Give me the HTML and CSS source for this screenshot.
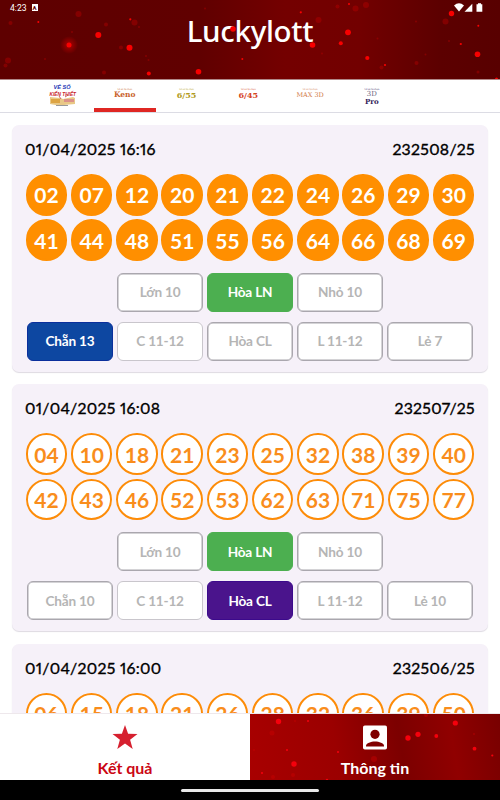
FILE: index.html
```html
<!DOCTYPE html>
<html lang="vi">
<head>
<meta charset="utf-8">
	<title>Luckylott</title>

	<link rel="stylesheet" href="styles.css">
</head>
<body>

<div class="app">
	<div class="header">
		<svg class="sparks" width="500" height="79" viewBox="0 0 500 79">
			<defs>
				<radialGradient id="glow">
					<stop offset="0" stop-color="#f00" stop-opacity=".5"/>
					<stop offset="1" stop-color="#f00" stop-opacity="0"/>
				</radialGradient>
			</defs>
			<circle cx="69" cy="45" r="9" fill="url(#glow)"/>
			<g fill="#c00000" opacity=".38">
				<circle cx="78.500" cy="14" r="3"/>
				<circle cx="10.500" cy="23" r="2"/>
				<circle cx="106" cy="24.500" r="2"/>
				<circle cx="134.500" cy="22.500" r="3"/>
				<circle cx="139" cy="27" r="1"/>
				<circle cx="8" cy="60.500" r="3"/>
				<circle cx="5.500" cy="65.500" r="2"/>
				<circle cx="121" cy="47.500" r="2"/>
				<circle cx="104" cy="72.500" r="2"/>
				<circle cx="72" cy="32" r="1"/>
				<circle cx="45" cy="59" r="1"/>
				<circle cx="146" cy="56" r="1"/>
				<circle cx="148.500" cy="60" r="1"/>
				<circle cx="205" cy="8.500" r="1"/>
				<circle cx="318.500" cy="20" r="3"/>
				<circle cx="337.500" cy="6.500" r="2"/>
				<circle cx="355.500" cy="8.500" r="3"/>
				<circle cx="366" cy="5" r="3"/>
				<circle cx="445.500" cy="21.500" r="3"/>
				<circle cx="381.500" cy="67.500" r="2"/>
				<circle cx="416.500" cy="63" r="2"/>
				<circle cx="425.500" cy="54.500" r="1"/>
				<circle cx="416" cy="21.500" r="1"/>
				<circle cx="377.500" cy="38.500" r="1"/>
				<circle cx="322" cy="53.500" r="1"/>
				<circle cx="478" cy="72" r="1.500"/>
				<circle cx="449" cy="41" r="1"/>
			</g>
			<g fill="#f80000">
				<circle cx="69" cy="45" r="2.500"/>
				<circle cx="98.300" cy="35" r="3"/>
				<circle cx="129.500" cy="47.700" r="3"/>
				<circle cx="148.800" cy="73.500" r="2"/>
				<circle cx="198.500" cy="71.700" r="2.800"/>
				<circle cx="38.300" cy="22" r="1"/>
				<circle cx="130.300" cy="19.300" r="1.100"/>
				<circle cx="242.300" cy="59" r="1"/>
				<circle cx="312.500" cy="45" r="2.800"/>
				<circle cx="348" cy="32.300" r="2.900"/>
				<circle cx="340.800" cy="43.300" r="2"/>
				<circle cx="367.300" cy="58" r="2.100"/>
				<circle cx="385" cy="65" r="1.100"/>
				<circle cx="300.800" cy="12.300" r="1.100"/>
				<circle cx="349" cy="4" r="1"/>
				<circle cx="451.500" cy="13.500" r="2.700"/>
				<circle cx="477.500" cy="54.200" r="2.800"/>
				<circle cx="478.300" cy="25.700" r="1"/>
				<circle cx="460.800" cy="44" r="1.100"/>
				<circle cx="496.500" cy="79" r="1.500"/>
			</g>
		</svg>
		<div class="status">
			<span class="clock">4:23</span>
			<span class="badge">A</span>
			<svg class="signals" width="30" height="10" viewBox="0 0 30 10">
				<path d="M0 2.500Q5-1.800 10 2.500L5 8.500z" fill="#fff"/>
				<path d="M10.500 8.700L18.300 .7v8z" fill="#fff"/>
				<path d="M22.500 1.200h1.500V.3h3v.9h1.300v7.500h-5.800z" fill="#fff"/>
			</svg>
		</div>
		<h1 class="title">Luckylott</h1>
		<svg class="sparks" width="500" height="79" viewBox="0 0 500 79">
			<circle cx="233" cy="29" r="2.800" fill="#f80000"/>
		</svg>
	</div>

	<div class="tabs">
		<div class="tab">
			<svg width="28" height="26" viewBox="0 0 28 26">
				<path d="M1 16l10 1 3 1 10-2 2 1v6l-11 1-3 1-11-2z" fill="#e9c886"/>
				<path d="M2 18h9v4H2z" fill="#dda443"/>
				<path d="M15 18h10v3H15z" fill="#dc9188"/>
				<path d="M7 24.500h12" stroke="#999" stroke-width="1"/>
				<path d="M10 15l2 3M16 16l3-2" stroke="#c66" stroke-width="1"/>
				<text x="4.500" y="7.500" class="logo-blue" textLength="17" lengthAdjust="spacingAndGlyphs">VÉ SỐ</text>
				<text x=".5" y="14.500" class="logo-red" textLength="26.500" lengthAdjust="spacingAndGlyphs">KIẾN THIẾT</text>
			</svg>
		</div>
		<div class="tab keno active"><small>Xổ số tự chọn</small><b>Keno</b></div>
		<div class="tab gold"><small>Xổ số tự chọn</small><b>6/55</b></div>
		<div class="tab red"><small>Xổ số tự chọn</small><b>6/45</b></div>
		<div class="tab max"><small>Xổ số tự chọn</small><span>MAX 3D</span></div>
		<div class="tab pro"><small>Xổ số tự chọn</small><span>3D</span><b>Pro</b></div>
	</div>

	<div class="list">
		<div class="card filled">
			<div class="card-head"><span class="date">01/04/2025 16:16</span><span>232508/25</span></div>
			<div class="balls">
				<span>02</span><span>07</span><span>12</span><span>20</span><span>21</span>
				<span>22</span><span>24</span><span>26</span><span>29</span><span>30</span>
				<span>41</span><span>44</span><span>48</span><span>51</span><span>55</span>
				<span>56</span><span>64</span><span>66</span><span>68</span><span>69</span>
			</div>
			<div class="bets">
				<span class="bet">Lớn 10</span>
				<span class="bet green">Hòa LN</span>
				<span class="bet">Nhỏ 10</span>
			</div>
			<div class="bets">
				<span class="bet blue">Chẵn 13</span>
				<span class="bet light">C 11-12</span>
				<span class="bet">Hòa CL</span>
				<span class="bet">L 11-12</span>
				<span class="bet">Lẻ 7</span>
			</div>
		</div>

		<div class="card">
			<div class="card-head"><span class="date">01/04/2025 16:08</span><span>232507/25</span></div>
			<div class="balls">
				<span>04</span><span>10</span><span>18</span><span>21</span><span>23</span>
				<span>25</span><span>32</span><span>38</span><span>39</span><span>40</span>
				<span>42</span><span>43</span><span>46</span><span>52</span><span>53</span>
				<span>62</span><span>63</span><span>71</span><span>75</span><span>77</span>
			</div>
			<div class="bets">
				<span class="bet">Lớn 10</span>
				<span class="bet green">Hòa LN</span>
				<span class="bet">Nhỏ 10</span>
			</div>
			<div class="bets">
				<span class="bet">Chẵn 10</span>
				<span class="bet light">C 11-12</span>
				<span class="bet purple">Hòa CL</span>
				<span class="bet">L 11-12</span>
				<span class="bet">Lẻ 10</span>
			</div>
		</div>

		<div class="card">
			<div class="card-head"><span class="date">01/04/2025 16:00</span><span>232506/25</span></div>
			<div class="balls">
				<span>06</span><span>15</span><span>18</span><span>21</span><span>26</span>
				<span>28</span><span>32</span><span>36</span><span>39</span><span>50</span>
			</div>
		</div>
	</div>

	<div class="nav">
		<div class="nav-item">
			<svg width="26" height="25" viewBox="0 0 26 25">
				<path d="M13 0l3.100 8.800 9.400.300-7.400 5.700 2.600 9.100L13 18.600l-7.700 5.300 2.600-9.100L.5 9.100l9.400-.3z" fill="#d6202f"/>
			</svg>
			<span>Kết quả</span>
		</div>
		<div class="nav-item info">
			<svg class="sparks" width="250" height="66" viewBox="0 0 250 66">
				<g fill="#d00000" opacity=".4">
					<circle cx="22" cy="19" r="2.500"/>
					<circle cx="124" cy="45" r="3"/>
					<circle cx="43" cy="61" r="2"/>
					<circle cx="23" cy="63" r="2"/>
					<circle cx="176" cy="1" r="2"/>
					<circle cx="45" cy="7" r="1"/>
					<circle cx="4" cy="36" r="1"/>
					<circle cx="224" cy="20" r="1"/>
				</g>
				<g fill="#f5000c">
					<circle cx="28.500" cy="7.500" r="2.700"/>
					<circle cx="58" cy="7" r="1"/>
					<circle cx="44" cy="50" r="2.700"/>
					<circle cx="12" cy="59" r="1"/>
					<circle cx="37" cy="36" r="1"/>
					<circle cx="88" cy="38" r="1"/>
					<circle cx="158" cy="24" r="2.700"/>
					<circle cx="168" cy="20.300" r="2.600"/>
					<circle cx="186.300" cy="22" r="1.900"/>
					<circle cx="205.300" cy="9" r="2.600"/>
					<circle cx="224.500" cy="34.700" r="1.900"/>
					<circle cx="242.300" cy="41.500" r="1.100"/>
					<circle cx="77" cy="66" r="1.200"/>
				</g>
			</svg>
			<svg width="24" height="25" viewBox="0 0 24 25">
				<rect y=".5" width="24" height="24" rx="1.800" fill="#fff"/>
				<circle cx="12" cy="9.300" r="4.600" fill="#800000"/>
				<path d="M3 21.500v-.8c0-2.600 5-4.300 9-4.300s9 1.700 9 4.300v.8z" fill="#800000"/>
			</svg>
			<span>Thông tin</span>
		</div>
	</div>
	<div class="gesture"><i></i></div>
</div>

</body>
</html>
```
FILE: styles.css
```css
*{
	box-sizing: border-box;
}
body{
	margin: 0;
	font-family: Lato, "Noto Sans", sans-serif;
}
.app{
	width: 500px;
	height: 800px;
	display: flex;
	flex-direction: column;
	overflow: hidden;
	background: #fff;
}

.header{
	position: relative;
	flex: none;
	height: 80px;
	color: #fff;
	background: linear-gradient(90deg, #5e0000 0%, #600000 40%, #740000 57%, #720000 72%, #5c0000 88%, #580000 100%);
	border-bottom: 1px solid #b08888;
}
.sparks{
	position: absolute;
	left: 0;
	top: 0;
}
.status{
	position: relative;
	display: flex;
	align-items: center;
	height: 15px;
	padding: 0 16px 0 10px;
	font: 8.6px Roboto, sans-serif;
}
.badge{
	width: 6px;
	height: 7px;
	margin-left: 5px;
	background: #fff;
	color: #600000;
	font: bold 6px/7px Roboto, sans-serif;
	text-align: center;
}
.signals{
	margin-left: auto;
}
.title{
	position: relative;
	margin: 0;
	font: 500 29.5px/32px "Noto Sans", sans-serif;
	text-align: center;
	letter-spacing: -0.3px;
}

.tabs{
	flex: none;
	display: flex;
	height: 33px;
	padding-left: 32px;
	border-bottom: 1px solid #dcdce4;
}
.tab{
	width: 61.8px;
	padding-top: 8px;
	display: flex;
	flex-direction: column;
	align-items: center;
	font: 8px/10px "DejaVu Serif", serif;
}
.tab:first-child{
	padding-top: 1px;
}
.tab svg{
	flex: none;
	overflow: visible;
}
.tab small{
	font-size: 2.2px;
	line-height: 3px;
	margin-bottom: -1px;
}
.tab.active{
	height: 32px;
	border-bottom: 4px solid #df2723;
}
.keno{
	color: #c9622c;
}
.keno b{
	font-size: 7.5px;
}
.gold{
	color: #b19a20;
}
.red{
	color: #d5451f;
}
.max{
	color: #cf7847;
	font-size: 6.5px;
}
.pro{
	color: #35255b;
	font-size: 7px;
	line-height: 8px;
}
.pro span{
	color: #6c6580;
}
.logo-blue,
.logo-red{
	font: italic bold 6px "Liberation Sans", sans-serif;
	fill: #2436b5;
}
.logo-red{
	fill: #c81b2c;
}

.list{
	flex: 1;
	min-height: 0;
	overflow: hidden;
	padding: 12px 12px 0;
}
.card{
	height: 247px;
	margin-bottom: 12.3px;
	padding: 14px 13px 0;
	background: #f6f1f9;
	border-radius: 7px;
	box-shadow: 0 1px 1px #dedae2;
}
.card-head{
	display: flex;
	justify-content: space-between;
	height: 35px;
	font-size: 15.8px;
	line-height: 20px;
	letter-spacing: 0.3px;
	color: #000;
	font-variant-numeric: proportional-nums;
	-webkit-text-stroke: 0.35px #000;
}
.balls{
	display: grid;
	grid-template-columns: repeat(10, 41.5px);
	grid-auto-rows: 41.5px;
	gap: 3.8px 3.75px;
	padding-left: 0.7px;
}
.balls span{
	display: flex;
	align-items: center;
	justify-content: center;
	border: 2px solid #fd8c08;
	border-radius: 50%;
	background: #fff;
	color: #f98d1c;
	font-size: 21px;
	font-weight: bold;
}
.filled .balls span{
	background: #ff8f00;
	border-color: #ff8f00;
	color: #fff;
}
.bets{
	display: flex;
	justify-content: center;
	gap: 4.4px;
	margin-top: 10px;
}
.balls + .bets{
	margin-top: 12px;
}
.bet{
	width: 85.6px;
	height: 39px;
	display: flex;
	align-items: center;
	justify-content: center;
	border: 1px solid #aaa7ae;
	border-radius: 6px;
	background: #fff;
	box-shadow: inset 0 0 0 0.5px #aaa7ae;
	color: #b5b5b5;
	font-size: 13.6px;
	font-weight: bold;
	letter-spacing: -0.2px;
}
.bet.light{
	border-color: #c9c6cc;
	box-shadow: none;
}
.bet.green,
.bet.blue,
.bet.purple{
	color: #fff;
	background: #4caf50;
	border-color: #4caf50;
	box-shadow: none;
}
.bet.blue{
	background: #0d47a1;
	border-color: #0a2f9c;
}
.bet.purple{
	background: #4a148c;
	border-color: #3c0a8c;
}

.nav{
	flex: none;
	display: flex;
	height: 67px;
	border-top: 1px solid #eee8ec;
}
.nav-item{
	position: relative;
	width: 250px;
	padding-top: 11px;
	display: flex;
	flex-direction: column;
	align-items: center;
	color: #cb0613;
	font-size: 16px;
	font-weight: bold;
	line-height: 19px;
	background: #fff;
}
.nav-item > svg{
	flex: none;
}
.nav-item > span{
	position: relative;
	margin-top: 8px;
}
.nav-item > svg:not(.sparks){
	position: relative;
}
.info{
	color: #fff;
	background: linear-gradient(80deg, #a80000, #9b0000 35%, #7c0000 60%, #900000 80%, #780000);
}
.gesture{
	flex: none;
	height: 20px;
	display: flex;
	justify-content: center;
	background: #000;
}
.gesture i{
	width: 138px;
	height: 3px;
	margin-top: 8.5px;
	border-radius: 2px;
	background: #e8e8e8;
}
```
